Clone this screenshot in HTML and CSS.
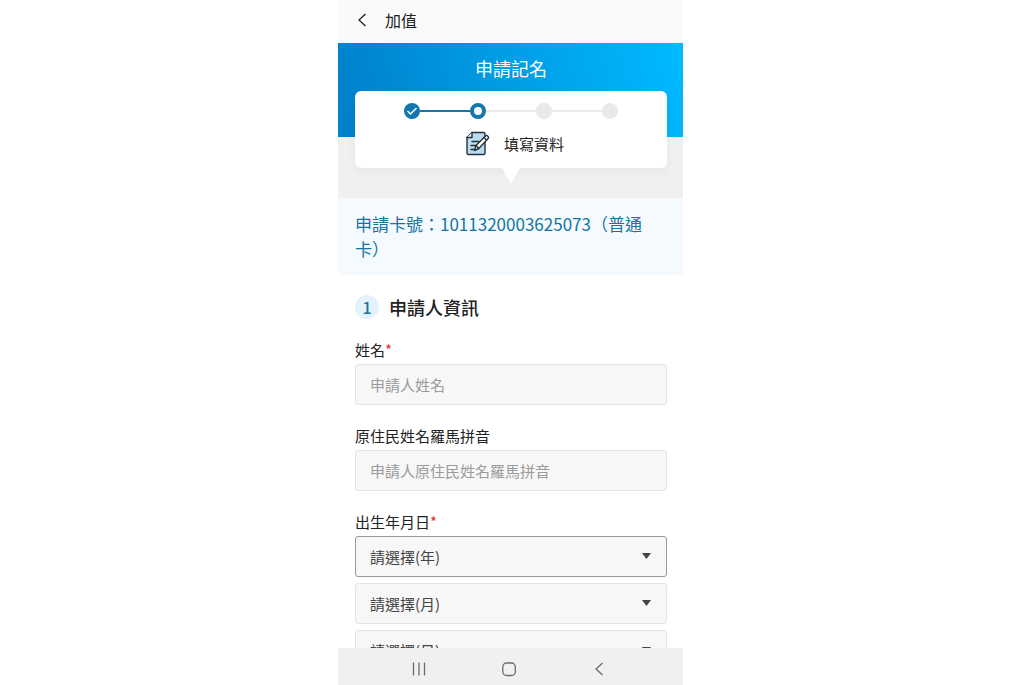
FILE: index.html
```html
<!DOCTYPE html>
<html lang="zh-Hant">
<head>
<meta charset="utf-8">
<meta name="viewport" content="width=device-width, initial-scale=1">
<title>申請記名</title>
<link rel="stylesheet" href="styles.css">
</head>
<body>
<div class="phone">
  <header class="appbar">
    <button class="icon-button" type="button" aria-label="返回">
      <svg width="10" height="16" viewBox="0 0 10 16" fill="none" stroke="#222" stroke-width="1.3"><path d="M8.500 2 2 8l6.500 6"/></svg>
    </button>
    <span class="appbar-title">加值</span>
  </header>
  <main class="content">
    <section class="hero">
      <h1 class="hero-title">申請記名</h1>
      <div class="progress">
        <ol class="steps">
          <li class="step done"><span class="dot"><svg width="16" height="16" viewBox="0 0 16 16" fill="none" stroke="#fff" stroke-width="1.5"><path d="m3.5 8 3 3 6-6"/></svg></span></li>
          <li class="step current"><span class="dot"></span></li>
          <li class="step"><span class="dot"></span></li>
          <li class="step"><span class="dot"></span></li>
        </ol>
        <div class="step-name">
          <svg width="24" height="26" viewBox="0 0 24 26" fill="none" stroke="#263238" stroke-width="1.400" stroke-linejoin="round" stroke-linecap="round">
            <path d="M6 1.500h11.500q1.500 0 1.500 1.500V22q0 1.500-1.500 1.500H2.500Q1 23.500 1 22V6.500Z" fill="#b9dcf1"/>
            <path d="M1 6.500h5v-5" fill="#fff"/>
            <path d="M6 10.500h7M5 14.500h5M5 18.500h3"/>
            <path d="m8.500 19.500 1.500-5L19.500 5q1.200-1 2.400.2 1.200 1.200.2 2.400L12.800 17.500Z" fill="#fff"/>
            <path d="m18 6.500 2.600 2.600M10 14.500l2.800 3"/>
          </svg>
          <span>填寫資料</span>
        </div>
      </div>
    </section>
    <p class="card-number">申請卡號：1011320003625073（普通卡）</p>
    <form class="form">
      <h2 class="section-title"><span class="badge">1</span>申請人資訊</h2>
      <div class="field">
        <label for="name">姓名<span class="required">*</span></label>
        <input class="control" id="name" type="text" placeholder="申請人姓名">
      </div>
      <div class="field">
        <label for="roman">原住民姓名羅馬拼音</label>
        <input class="control" id="roman" type="text" placeholder="申請人原住民姓名羅馬拼音">
      </div>
      <div class="field">
        <label for="year">出生年月日<span class="required">*</span></label>
        <div class="selects">
          <div class="select-box"><select class="control active" id="year"><option>請選擇(年)</option></select></div>
          <div class="select-box"><select class="control" aria-label="月"><option>請選擇(月)</option></select></div>
          <div class="select-box"><select class="control" aria-label="日"><option>請選擇(日)</option></select></div>
        </div>
      </div>
    </form>
  </main>
  <nav class="system-nav">
    <button class="icon-button" type="button" aria-label="最近使用"><svg width="16" height="16" viewBox="0 0 16 16" fill="none" stroke="#6b6b6b" stroke-width="1.300"><path d="M2.500 1.500v13M8 1.500v13M13.500 1.500v13"/></svg></button>
    <button class="icon-button" type="button" aria-label="主畫面"><svg width="16" height="16" viewBox="0 0 16 16" fill="none" stroke="#6b6b6b" stroke-width="1.300"><rect x="1.800" y="2" width="12.500" height="12.500" rx="3.800"/></svg></button>
    <button class="icon-button" type="button" aria-label="返回"><svg width="16" height="16" viewBox="0 0 16 16" fill="none" stroke="#6b6b6b" stroke-width="1.300"><path d="m11.500 2-6.500 6 6.500 6"/></svg></button>
  </nav>
</div>
</body>
</html>
```
FILE: styles.css
```css
* { box-sizing: border-box; }

body {
  margin: 0;
  padding-right: 3px;
  background: #fff;
  color: #222;
  font-family: "Noto Sans CJK TC", sans-serif;
  font-size: 15px;
  line-height: 20px;
}

button, input, select { font: inherit; }

.phone {
  display: flex;
  flex-direction: column;
  max-width: 345px;
  height: 100vh;
  margin: 0 auto;
}

.icon-button {
  display: flex;
  padding: 0;
  border: 0;
  background: none;
}

.appbar {
  display: flex;
  align-items: center;
  gap: 18px;
  padding: 8px 19px 11px;
  background: #fafafa;
  font-size: 16px;
  line-height: 24px;
}

.content {
  flex: 1;
  min-height: 0;
  overflow-y: auto;
  scrollbar-width: none;
}

.hero {
  padding: 12px 16px 30px 17px;
  background: linear-gradient(75deg, #007fca, #00baff) top / 100% 94px no-repeat, #f0f0f0;
}

.hero-title {
  margin: 0 0 9px;
  color: #fff;
  font-size: 18px;
  font-weight: 400;
  line-height: 27px;
  text-align: center;
}

.progress {
  position: relative;
  padding: 12px 49px 11px;
  border-radius: 6px;
  background: #fff;
  box-shadow: 0 4px 12px rgba(0, 0, 0, 0.04);
}

.progress::after {
  position: absolute;
  top: 100%;
  left: 50%;
  width: 18px;
  height: 16px;
  margin-left: -9px;
  background: #fff;
  clip-path: polygon(0 0, 100% 0, 50% 100%);
  content: "";
}

.steps {
  display: flex;
  margin: 0;
  padding: 0;
  list-style: none;
}

.step {
  display: flex;
  flex: 1;
  align-items: center;
}

.step:first-child { flex: none; }

.step:not(:first-child)::before {
  flex: 1;
  height: 2px;
  background: #ebebeb;
  content: "";
}

.dot {
  display: flex;
  width: 16px;
  height: 16px;
  border-radius: 50%;
  background: #e9e9e9;
}

.done .dot { background: #1376ac; }

.current .dot {
  border: 4px solid #1376ac;
  background: #fff;
}

.step.current::before { background: #1376ac; }

.step-name {
  display: flex;
  align-items: center;
  gap: 14px;
  margin-top: 12px;
  padding-left: 62px;
}

.card-number {
  margin: 0;
  padding: 13px 17px 14px;
  background: #f5faff;
  color: #14749f;
  font-size: 17px;
  line-height: 25px;
}

.form { padding: 19px 16px 20px 17px; }

.section-title {
  display: flex;
  align-items: center;
  gap: 10px;
  margin: 0 0 20px;
  font-size: 18px;
  font-weight: 500;
  line-height: 26px;
}

.badge {
  width: 24px;
  border-radius: 50%;
  background: #e3f2fb;
  color: #14749f;
  font-size: 16px;
  line-height: 24px;
  text-align: center;
}

.field { margin-bottom: 21px; }

.field label {
  display: block;
  margin-bottom: 4px;
}

.required { color: #d9362b; }

.control {
  display: block;
  width: 100%;
  height: 41px;
  padding: 0 14px;
  border: 1px solid #e4e4e4;
  border-radius: 3px;
  background: #f7f7f7;
  color: #444;
  appearance: none;
}

.control::placeholder { color: #9b9b9b; }

.control.active { border-color: #999; }

.selects {
  display: grid;
  gap: 6px;
}

.select-box { position: relative; }

.select-box::after {
  position: absolute;
  top: 17px;
  right: 16px;
  width: 9px;
  height: 6px;
  background: #444;
  clip-path: polygon(0 0, 100% 0, 50% 100%);
  content: "";
  pointer-events: none;
}

.system-nav {
  display: flex;
  align-items: center;
  justify-content: space-between;
  height: 37px;
  padding: 5px 76px 0 73px;
  background: #f0f0f0;
}
```
